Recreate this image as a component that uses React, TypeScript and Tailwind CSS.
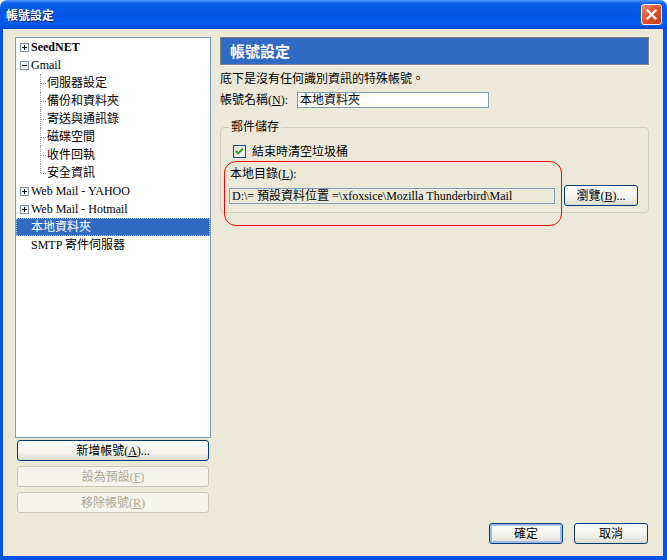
import React from 'react';

const font = "font-['Liberation_Serif','Noto_Sans_CJK_TC',serif]";

const Expander = ({ open }: { open?: boolean }) => (
  <svg width="9" height="9" className="shrink-0">
    <rect x="0.5" y="0.5" width="8" height="8" fill="#f7f6f1" stroke="#7b8fa8" />
    <path d="M2 4.5h5" stroke="#000" />
    {!open && <path d="M4.5 2v5" stroke="#000" />}
  </svg>
);

const XpButton = ({
  children,
  disabled,
  glow,
  className = ''
}: {
  children: React.ReactNode;
  disabled?: boolean;
  glow?: boolean;
  className?: string;
}) => (
  <button
    disabled={disabled}
    className={
      'h-[21px] rounded-[3px] border flex items-center justify-center text-[12px] leading-[14px] ' +
      (disabled
        ? 'border-[#c9c7ba] bg-[#f5f4ea] text-[#aca899] '
        : 'border-[#003c74] bg-[linear-gradient(to_bottom,#ffffff,#f3f2ec_60%,#dedcd2)] text-black ') +
      (glow ? 'shadow-[inset_0_0_0_2px_#9dbcf0] ' : '') +
      className
    }
  >
    {children}
  </button>
);

const children = ['伺服器設定', '備份和資料夾', '寄送與通訊錄', '磁碟空間', '收件回執', '安全資訊'];

const App = () => {
  return (
    <div className={`w-[667px] h-[560px] flex flex-col ${font} text-[12px] leading-[14px] text-black`}>
      {/* title bar */}
      <div className="h-[29px] shrink-0 rounded-t-[7px] bg-[linear-gradient(to_bottom,#4a9afc_0%,#0a5fe8_12%,#0056e6_45%,#005cf0_85%,#0046c8_100%)] flex items-center pl-[6px] pr-[5px]">
        <span className="text-white font-bold text-[12px] [text-shadow:1px_1px_0_#0b1f6e] font-['Noto_Sans_CJK_TC',sans-serif]">
          帳號設定
        </span>
        <div className="ml-auto w-[21px] h-[21px] rounded-[3px] border border-white bg-[linear-gradient(135deg,#f08a6c,#e0502c_50%,#c43a17)] flex items-center justify-center">
          <svg width="11" height="11" viewBox="0 0 11 11">
            <path d="M1.5 1.5l8 8M9.5 1.5l-8 8" stroke="#fff" strokeWidth="2.2" strokeLinecap="square" />
          </svg>
        </div>
      </div>

      {/* body */}
      <div className="flex-1 bg-[#ece9d8] border-l-[3px] border-r-[4px] border-b-[4px] border-[#0852e0] flex pl-[12px] pt-[8px] pb-[12px] gap-[9px]">
        {/* left column */}
        <div className="w-[196px] flex flex-col">
          <div className="h-[401px] bg-white border border-[#7f9db9]">
            <div className="h-[18px] flex items-center gap-[2px] pl-[4px]">
              <Expander />
              <span className="font-bold">SeedNET</span>
            </div>
            <div className="h-[18px] flex items-center gap-[2px] pl-[4px]">
              <Expander open />
              <span>Gmail</span>
            </div>
            {children.map((c, i) => (
              <div key={c} className="relative h-[18px] flex items-center pl-[31px]">
                <span
                  className={
                    'absolute left-[24px] top-0 border-l border-dotted border-[#a0a0a0] ' +
                    (i === children.length - 1 ? 'h-[9px]' : 'h-full')
                  }
                />
                <span className="absolute left-[25px] top-[9px] w-[5px] border-t border-dotted border-[#a0a0a0]" />
                <span>{c}</span>
              </div>
            ))}
            <div className="h-[18px] flex items-center gap-[2px] pl-[4px]">
              <Expander />
              <span>Web Mail - YAHOO</span>
            </div>
            <div className="h-[18px] flex items-center gap-[2px] pl-[4px]">
              <Expander />
              <span>Web Mail - Hotmail</span>
            </div>
            <div className="h-[18px] flex items-center pl-[14px] bg-[#316ac5] text-white border border-dotted border-[#b8c6e4]">
              <span>本地資料夾</span>
            </div>
            <div className="h-[18px] flex items-center pl-[15px]">
              <span>SMTP 寄件伺服器</span>
            </div>
          </div>
          <div className="px-[2px] flex flex-col">
            <XpButton className="mt-[2px]">
              新增帳號(<u>A</u>)...
            </XpButton>
            <XpButton disabled className="mt-[5px]">
              設為預設(<u>F</u>)
            </XpButton>
            <XpButton disabled className="mt-[5px]">
              移除帳號(<u>R</u>)
            </XpButton>
          </div>
        </div>

        {/* right column */}
        <div className="w-[429px] flex flex-col">
          <div className="h-[28px] border border-[#808080] shadow-[1px_1px_0_#ffffff] bg-[#316ac5] flex items-center pl-[9px]">
            <span className="text-white font-bold text-[15px] font-['Noto_Sans_CJK_TC',sans-serif]">帳號設定</span>
          </div>
          <div className="mt-[7px] h-[14px]">底下是沒有任何識別資訊的特殊帳號。</div>
          <div className="mt-[6px] h-[16px] flex items-center">
            <span className="w-[77px]">
              帳號名稱(<u>N</u>):
            </span>
            <div className="w-[192px] h-[16px] border border-[#7f9db9] bg-white flex items-center pl-[2px]">
              本地資料夾
            </div>
          </div>

          <fieldset className="relative mt-[12px] border border-[#d0d0bf] rounded-[4px] pb-[6px]">
            <legend className="ml-[8px] px-[2px] h-[14px]">郵件儲存</legend>
            <div className="mt-[11px] ml-[12px] flex items-center gap-[6px] h-[13px]">
              <svg width="13" height="13" viewBox="0 0 13 13" className="shrink-0">
                <defs>
                  <linearGradient id="cb" x1="0" y1="0" x2="1" y2="1">
                    <stop offset="0" stopColor="#dcdbd3" />
                    <stop offset="1" stopColor="#ffffff" />
                  </linearGradient>
                </defs>
                <rect x="0.5" y="0.5" width="12" height="12" fill="url(#cb)" stroke="#1c5180" />
                <path d="M3 6l2.2 2.4L10 3.6" fill="none" stroke="#21a121" strokeWidth="2" />
              </svg>
              <span>結束時清空垃圾桶</span>
            </div>
            <div className="mt-[9px] ml-[9px] h-[14px]">
              本地目錄(<u>L</u>):
            </div>
            <div className="mt-[4px] ml-[8px] h-[21px] flex items-center">
              <div className="w-[326px] h-[16px] border border-[#7f9db9] bg-[#ece9d8] flex items-center pl-[2px] whitespace-nowrap overflow-hidden">
                D:\= 預設資料位置 =\xfoxsice\Mozilla Thunderbird\Mail
              </div>
              <XpButton className="ml-[9px] w-[74px]">
                瀏覽(<u>B</u>)...
              </XpButton>
            </div>
            <div className="absolute left-[3px] top-[27px] w-[338px] h-[65px] border border-[#ff0000] rounded-[12px] pointer-events-none" />
          </fieldset>

          <div className="mt-auto flex justify-end gap-[11px] pr-[1px]">
            <XpButton glow className="w-[74px]">
              確定
            </XpButton>
            <XpButton className="w-[74px]">取消</XpButton>
          </div>
        </div>
      </div>
    </div>
  );
};

export default App;
